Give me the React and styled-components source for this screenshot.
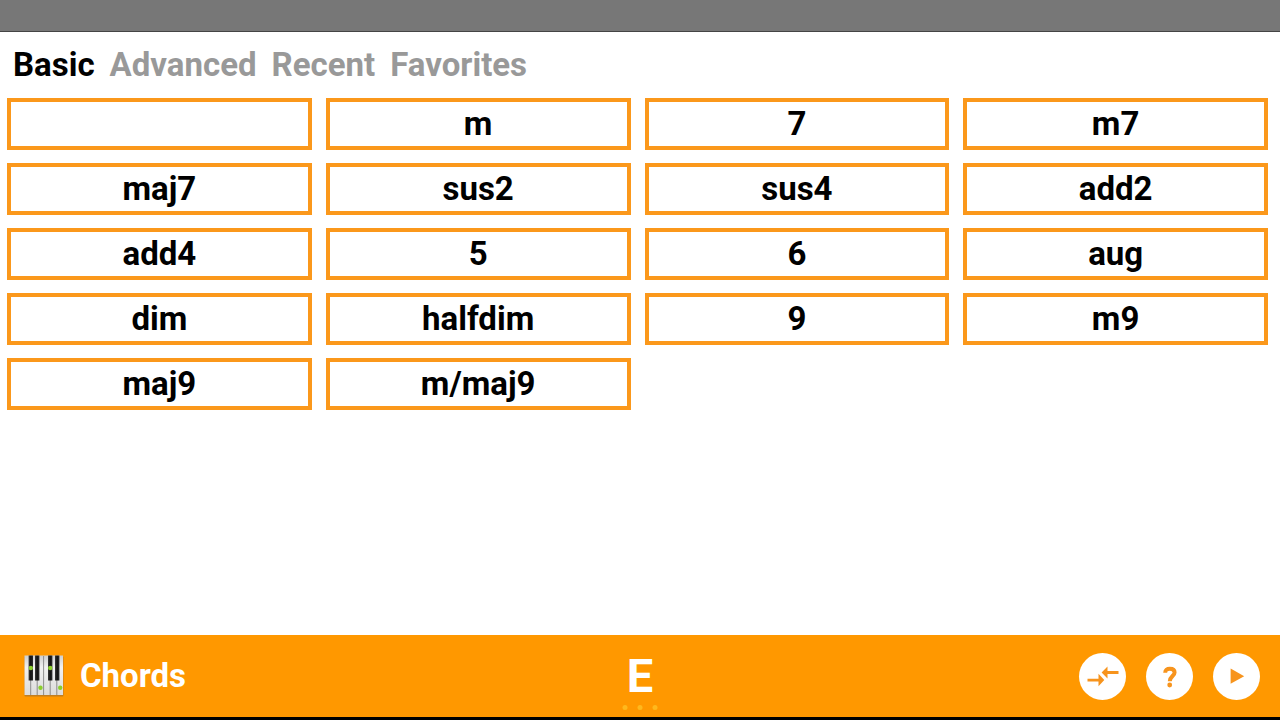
import {useState} from 'react';
import styled, {createGlobalStyle} from 'styled-components';

const tabs = ['Basic', 'Advanced', 'Recent', 'Favorites'];
const chords = [
    '', 'm', '7', 'm7',
    'maj7', 'sus2', 'sus4', 'add2',
    'add4', '5', '6', 'aug',
    'dim', 'halfdim', '9', 'm9',
    'maj9', 'm/maj9'
];

const PianoIcon = ()=>(
    <svg width="40" height="42" viewBox="0 0 40 42" aria-hidden="true">
        <defs>
            <linearGradient id="white-key" x1="0" y1="0" x2="0" y2="1">
                <stop offset="0" stopColor="#cfcfcf"/>
                <stop offset="0.3" stopColor="#f1f1f1"/>
                <stop offset="1" stopColor="#dcdcdc"/>
            </linearGradient>
            <linearGradient id="black-key" x1="0" y1="0" x2="1" y2="0">
                <stop offset="0" stopColor="#3a3a3a"/>
                <stop offset="0.5" stopColor="#111"/>
                <stop offset="1" stopColor="#2e2e2e"/>
            </linearGradient>
        </defs>
        <rect x="0.5" y="1.5" width="39" height="40" rx="1" fill="#a9742b" opacity="0.7"/>
        <rect x="0.5" y="0.5" width="38.5" height="39.5" fill="url(#white-key)"/>
        <path d="M6.7 25V40M13.2 1V40M19.6 1V40M26.2 25V40M32.8 25V40" stroke="#777" strokeWidth="0.8"/>
        {[4.6, 11, 24, 31].map(x=>(
            <rect key={x} x={x} y="0.5" width="4.4" height="25" fill="url(#black-key)"/>
        ))}
        <g fill="#8ccf2e">
            <circle cx="6.8" cy="13" r="2.2"/>
            <circle cx="26.2" cy="13" r="2.2"/>
            <circle cx="16.5" cy="32.7" r="2.2"/>
            <circle cx="36.2" cy="32.7" r="2.2"/>
        </g>
    </svg>
)

const SwapIcon = ()=>(
    <svg width="47" height="47" viewBox="0 0 47 47" fill="currentColor" aria-hidden="true">
        <path d="M8.5 25.7H19.5V20.8L25.3 27L19.5 33.2V28.5H8.5Z"/>
        <path d="M39.5 18.1H28.5V13.4L22.6 19.5L28.5 25.6V20.9H39.5Z"/>
    </svg>
)

const HelpIcon = ()=>(
    <svg width="47" height="47" viewBox="0 0 47 47" fill="none" aria-hidden="true">
        <path d="M19.2 19.8C19.2 17 20.9 15.7 23.9 15.7C26.9 15.7 28.6 17.2 28.6 19.5C28.6 22.8 23.8 23.4 23.8 28.2" stroke="currentColor" strokeWidth="4"/>
        <circle cx="23.7" cy="32" r="2.4" fill="currentColor"/>
    </svg>
)

const PlayIcon = ()=>(
    <svg width="47" height="47" viewBox="0 0 47 47" fill="currentColor" aria-hidden="true">
        <path d="M17.6 15.6V30.8L31.2 23.2Z"/>
    </svg>
)

const App = ()=>{
    const [activeTab, setActiveTab] = useState('Basic')
    return(
        <>
            <GlobalStyle/>
            <Page>
                <StatusBar/>
                <Tabs>
                    {tabs.map(tab=>(
                        <Tab key={tab} $active={tab === activeTab} onClick={()=>setActiveTab(tab)}>{tab}</Tab>
                    ))}
                </Tabs>
                <ChordGrid>
                    {chords.map(chord=>(
                        <ChordButton key={chord} aria-label={chord || 'major'}>{chord}</ChordButton>
                    ))}
                </ChordGrid>
                <Footer>
                    <Brand>
                        <PianoIcon/>
                        <Title>Chords</Title>
                    </Brand>
                    <RootNote>
                        E
                        <Dots><i/><i/><i/></Dots>
                    </RootNote>
                    <Actions>
                        <RoundButton aria-label="Swap"><SwapIcon/></RoundButton>
                        <RoundButton aria-label="Help"><HelpIcon/></RoundButton>
                        <RoundButton aria-label="Play"><PlayIcon/></RoundButton>
                    </Actions>
                </Footer>
            </Page>
        </>
    )
}

const GlobalStyle = createGlobalStyle`
  * {
    box-sizing: border-box;
  }

  body {
    margin: 0;
    background: white;
    font-family: Roboto, "Liberation Sans", sans-serif;
  }

  button {
    padding: 0;
    border: none;
    background: none;
    font-family: inherit;
    cursor: pointer;
  }
`;
const Page = styled.div`
  display: flex;
  flex-direction: column;
  min-height: 100vh;
`;
const StatusBar = styled.div`
  height: 32px;
  background: #777;
  border-bottom: 1px solid #444;
`;
const Tabs = styled.nav`
  display: flex;
  gap: 15px;
  padding: 13px;
`;
const Tab = styled.button`
  font-size: 33px;
  font-weight: 700;
  line-height: 40px;
  color: ${({$active})=>$active ? '#000' : '#999'};
`;
const ChordGrid = styled.main`
  display: grid;
  grid-template-columns: repeat(4, 1fr);
  align-content: start;
  flex: 1;
  gap: 13px 14px;
  padding: 0 12px 13px 7px;
`;
const ChordButton = styled.button`
  && {
    height: 52px;
    border: 4px solid #fb981b;
  }
  font-size: 33px;
  font-weight: 700;
  line-height: 40px;
  color: #000;
`;
const Footer = styled.footer`
  display: grid;
  grid-template-columns: 1fr auto 1fr;
  align-items: center;
  height: 85px;
  padding: 0 20px;
  color: white;
  background: #ff9800;
  border-bottom: 3px solid #000;
`;
const Brand = styled.div`
  display: flex;
  align-items: center;
  gap: 16px;
  padding-left: 4px;
`;
const Title = styled.h1`
  margin: 0;
  font-size: 33px;
  font-weight: 700;
  line-height: 40px;
`;
const RootNote = styled.button`
  position: relative;
  font-size: 47px;
  font-weight: 700;
  line-height: 56px;
  color: white;
`;
const Dots = styled.span`
  position: absolute;
  left: 50%;
  bottom: -6px;
  display: flex;
  gap: 10px;
  transform: translateX(-50%);

  i {
    width: 5px;
    height: 5px;
    border-radius: 50%;
    background: #ffb81c;
  }
`;
const Actions = styled.div`
  display: flex;
  justify-content: flex-end;
  gap: 20px;
`;
const RoundButton = styled.button`
  && {
    width: 47px;
    height: 47px;
    border-radius: 50%;
    color: #f7941d;
    background: white;
  }

  svg {
    display: block;
  }
`;
export default App;
